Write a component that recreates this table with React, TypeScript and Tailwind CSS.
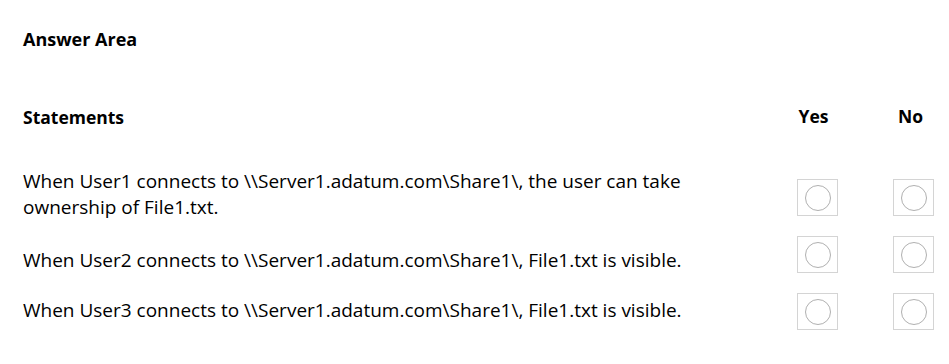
const statements = [
  {
    text: "When User1 connects to \\\\Server1.adatum.com\\Share1\\, the user can take ownership of File1.txt.",
    rowGap: "mt-0",
    boxOffset: "mt-[11px]",
  },
  {
    text: "When User2 connects to \\\\Server1.adatum.com\\Share1\\, File1.txt is visible.",
    rowGap: "mt-[27px]",
    boxOffset: "-mt-[11px]",
  },
  {
    text: "When User3 connects to \\\\Server1.adatum.com\\Share1\\, File1.txt is visible.",
    rowGap: "mt-[24px]",
    boxOffset: "-mt-[4px]",
  },
];

function RadioBox({ className }: { className: string }) {
  return (
    <div
      className={`w-[41px] h-[37px] shrink-0 border border-[#d4d4d4] flex items-center justify-center ${className}`}
    >
      <div className="w-[26px] h-[26px] rounded-full border border-[#b0b0b0]" />
    </div>
  );
}

export default function App() {
  return (
    <div
      className="w-[949px] h-[364px] bg-white text-black pl-[23px] pr-[15px] pt-[26px]"
      style={{ fontFamily: '"Open Sans", "Noto Sans", sans-serif' }}
    >
      {/* Title */}
      <div className="text-[18px] leading-[26px] font-bold">Answer Area</div>

      {/* Header row */}
      <div className="mt-[52px] flex items-start text-[17.5px] leading-[26px] font-bold">
        <div className="flex-1">Statements</div>
        <div className="w-[41px] pr-2 text-center -mt-px">Yes</div>
        <div className="w-[41px] ml-[55px] pr-[6px] text-center -mt-px">No</div>
      </div>

      {/* Statement rows */}
      <div className="mt-[38px] flex flex-col text-[19px] leading-[26px]">
        {statements.map((s) => (
          <div key={s.text} className={`flex items-start ${s.rowGap}`}>
            <div className="flex-1">
              <div className="max-w-[700px]">{s.text}</div>
            </div>
            <RadioBox className={s.boxOffset} />
            <RadioBox className={`ml-[55px] ${s.boxOffset}`} />
          </div>
        ))}
      </div>
    </div>
  );
}
